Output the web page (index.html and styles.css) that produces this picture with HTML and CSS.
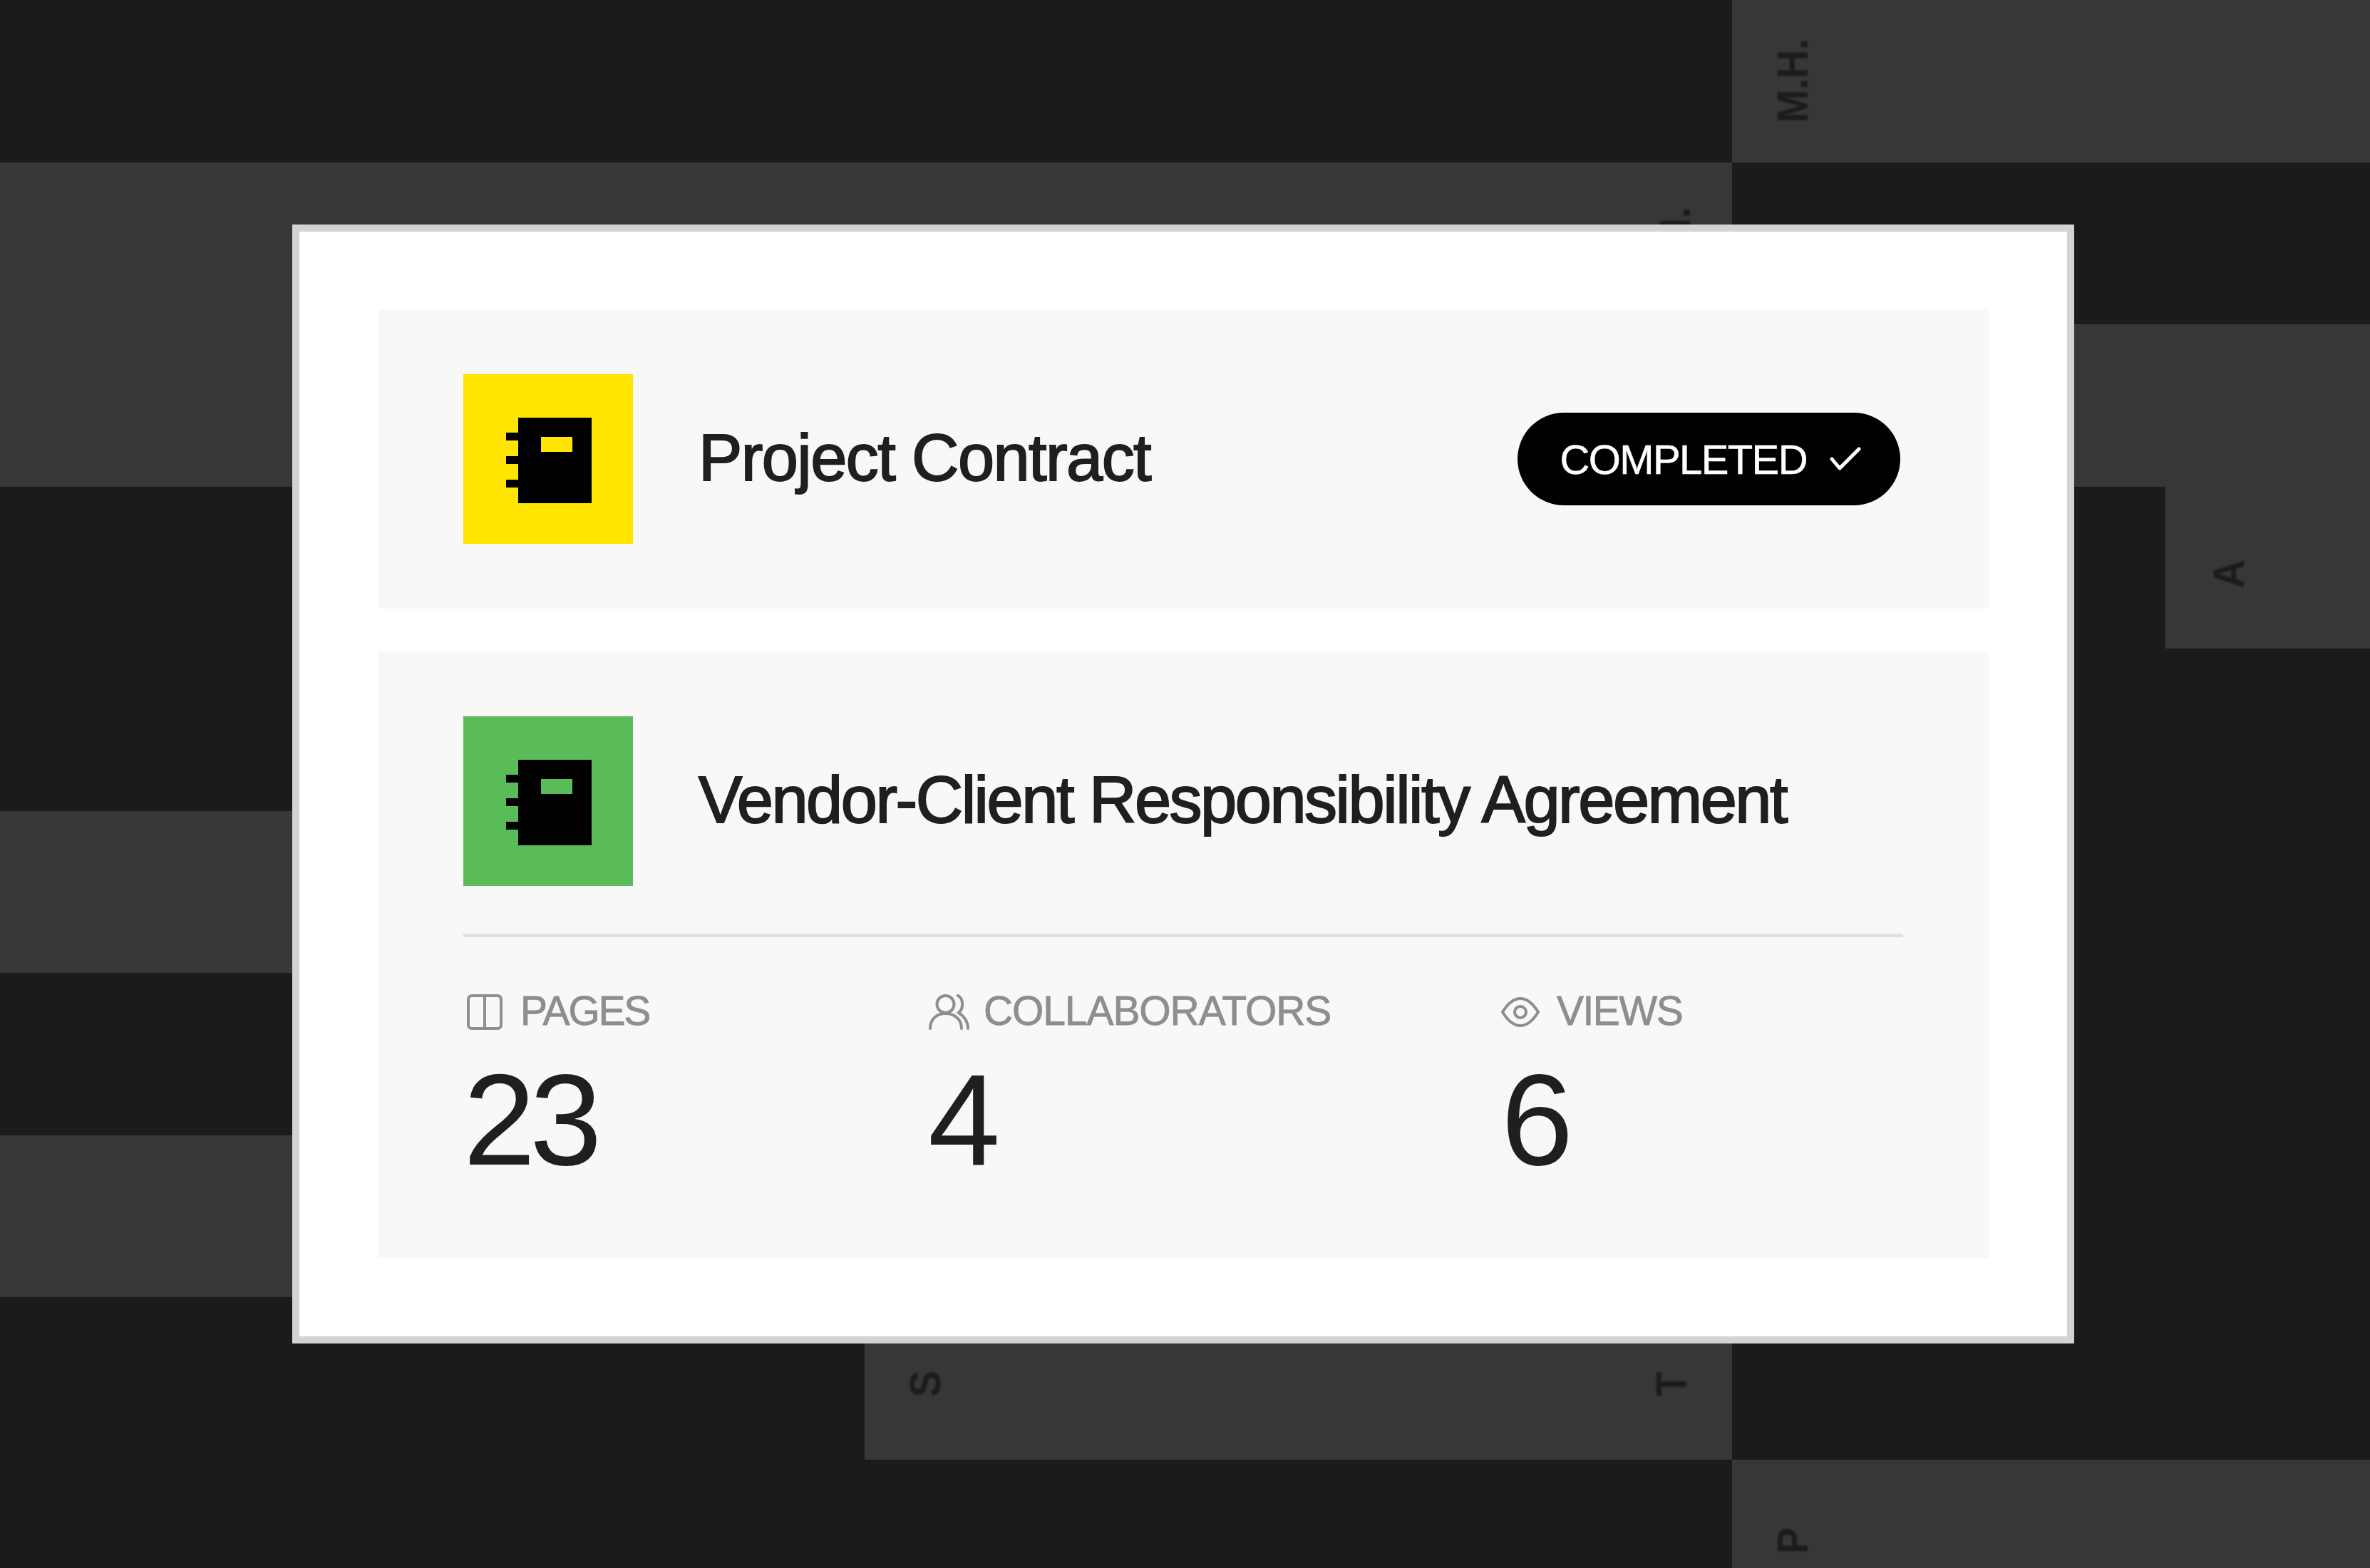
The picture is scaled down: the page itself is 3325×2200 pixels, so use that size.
FILE: index.html
```html
<!DOCTYPE html>
<html lang="en">
<head>
    <meta charset="UTF-8">
    <title>Project Contract</title>
    <link rel="stylesheet" href="styles.css">
</head>
<body>
    <div class="page">
        <!-- Schedule behind the dialog -->
        <div class="timeline">
            <div class="bar bar-mh"><span class="bar-label">M.H.</span></div>
            <div class="bar bar-wide"><span class="bar-label">M.H.</span></div>
            <div class="bar bar-third"></div>
            <div class="bar bar-a"><span class="bar-label">A</span></div>
            <div class="bar bar-left-one"></div>
            <div class="bar bar-left-two"></div>
            <div class="bar bar-st"><span class="bar-label">S</span><span class="bar-label">T</span></div>
            <div class="bar bar-p"><span class="bar-label">P</span></div>
        </div>

        <div class="modal">
            <section class="card">
                <div class="card-head">
                    <div class="tile tile-yellow">
                        <svg class="notebook" viewBox="0 0 120 120">
                            <path class="notebook-body" d="M17 0H120V120H17V98H0V87H17V65H0V54H17V32H0V21H17Z"/>
                            <rect class="notebook-tag" x="49" y="27" width="44" height="21"/>
                        </svg>
                    </div>
                    <h2 class="card-title">Project Contract</h2>
                    <div class="status">
                        <span>COMPLETED</span>
                        <svg class="status-check" viewBox="0 0 44 36">
                            <path d="M3 18L14 31L41 4"/>
                        </svg>
                    </div>
                </div>
            </section>

            <section class="card card-details">
                <div class="card-head">
                    <div class="tile tile-green">
                        <svg class="notebook" viewBox="0 0 120 120">
                            <path class="notebook-body" d="M17 0H120V120H17V98H0V87H17V65H0V54H17V32H0V21H17Z"/>
                            <rect class="notebook-tag" x="49" y="27" width="44" height="21"/>
                        </svg>
                    </div>
                    <h2 class="card-title card-title-long">Vendor-Client Responsibility Agreement</h2>
                </div>

                <div class="stats">
                    <div class="stat stat-pages">
                        <div class="stat-label">
                            <svg class="stat-icon" width="50" height="50" viewBox="0 0 50 50">
                                <rect x="2" y="2" width="46" height="46" rx="5"/>
                                <path d="M25 2V48"/>
                            </svg>
                            <span>PAGES</span>
                        </div>
                        <div class="stat-value">23</div>
                    </div>
                    <div class="stat stat-people">
                        <div class="stat-label">
                            <svg class="stat-icon" width="58" height="50" viewBox="0 0 58 50">
                                <ellipse cx="24.5" cy="14" rx="12" ry="12"/>
                                <path d="M3 48C3 35 12 27 24.5 27C37 27 47 35 47 48"/>
                                <path d="M42 2C50 6 50 20 43 26C50 30 56 38 56 48"/>
                            </svg>
                            <span>COLLABORATORS</span>
                        </div>
                        <div class="stat-value">4</div>
                    </div>
                    <div class="stat stat-views">
                        <div class="stat-label">
                            <svg class="stat-icon" width="54" height="50" viewBox="0 0 54 50">
                                <path d="M2 25C10 12 18 6 27 6C36 6 44 12 52 25C44 38 36 44 27 44C18 44 10 38 2 25Z"/>
                                <circle cx="27" cy="25" r="8"/>
                            </svg>
                            <span>VIEWS</span>
                        </div>
                        <div class="stat-value">6</div>
                    </div>
                </div>
            </section>
        </div>
    </div>
</body>
</html>
```

FILE: styles.css
```css
/* Page */
body {
    margin: 0;
    background: #1b1b1b;
    font-family: "Liberation Sans", Arial, sans-serif;
}

.page {
    position: relative;
    width: 3325px;
    height: 2200px;
    overflow: hidden;
}

/* Schedule grid */
.timeline {
    display: grid;
    grid-template-columns: 1213px 1217px 608px 287px;
    grid-auto-rows: 227.5px;
    height: 100%;
    overflow: hidden;
}

.bar {
    display: flex;
    align-items: center;
    justify-content: space-between;
    padding: 0 62px;
    background: #373737;
}

.bar-mh { grid-column: 3 / 5; grid-row: 1; }
.bar-wide { grid-column: 1 / 3; grid-row: 2 / 4; justify-content: flex-end; align-items: flex-start; padding: 56px 57px 0 0; }
.bar-third { grid-column: 3 / 5; grid-row: 3; }
.bar-a { grid-column: 4; grid-row: 4; padding: 18px 0 0 66px; }
.bar-left-one { grid-column: 1; grid-row: 6; }
.bar-left-two { grid-column: 1; grid-row: 8; }
.bar-st { grid-column: 2; grid-row: 9; padding-top: 16px; }
.bar-p { grid-column: 3 / 5; grid-row: 10; }

.bar-label {
    writing-mode: vertical-rl;
    transform: rotate(180deg) scaleY(0.9);
    font-size: 62px;
    font-weight: bold;
    line-height: 46px;
    color: #1c1c1c;
    filter: blur(1px);
}

/* Dialog */
.modal {
    position: absolute;
    top: 315px;
    left: 410px;
    width: 2500px;
    height: 1570px;
    box-sizing: border-box;
    display: flex;
    flex-direction: column;
    gap: 60px;
    padding: 109px 110px 110px;
    border: 10px solid #d3d3d3;
    background: #fff;
}

.card {
    padding: 91px 120px;
    background: #f8f8f8;
}

.card-details {
    flex: 1;
    padding-bottom: 0;
}

.card-head {
    display: flex;
    align-items: center;
    gap: 92px;
}

.tile {
    display: flex;
    align-items: center;
    justify-content: center;
    flex: none;
    width: 238px;
    height: 238px;
}

.tile-yellow { background: #ffe500; --tile: #ffe500; }
.tile-green { background: #5abc58; --tile: #5abc58; }

.notebook {
    width: 120px;
    height: 120px;
    margin: 3px 0 0 2px;
}

.notebook-body { fill: #000; }
.notebook-tag { fill: var(--tile); }

.card-title {
    margin: 0;
    padding-bottom: 4px;
    font-size: 92px;
    font-weight: normal;
    letter-spacing: -1.6px;
    color: #1f1f1f;
    -webkit-text-stroke: 2px #1f1f1f;
}

.card-title-long {
    letter-spacing: -2.5px;
}

/* Status pill */
.status {
    display: flex;
    align-items: center;
    gap: 32px;
    margin-left: auto;
    margin-right: 4px;
    height: 130px;
    padding: 0 55px 0 59px;
    border-radius: 65px;
    background: #000;
    color: #fff;
    font-size: 58px;
    letter-spacing: -1.6px;
    -webkit-text-stroke: 0.5px #fff;
}

.status-check {
    width: 44px;
    height: 36px;
    fill: none;
    stroke: #fff;
    stroke-width: 5;
    stroke-linecap: round;
    stroke-linejoin: round;
}

/* Stats */
.stats {
    display: grid;
    grid-template-columns: 647px 804px 1fr;
    margin-top: 67px;
    padding-top: 80px;
    border-top: 5px solid #e1e1e1;
}

.stat-label {
    display: flex;
    align-items: center;
    gap: 24px;
    height: 50px;
    padding-left: 5px;
    font-size: 57px;
    line-height: 46px;
    letter-spacing: -1.5px;
    color: #8e8e8e;
    -webkit-text-stroke: 0.8px #8e8e8e;
}

.stat-label span {
    margin-top: -4px;
}

.stat-pages .stat-label {
    letter-spacing: -2.2px;
    gap: 25px;
}

.stat-people .stat-label {
    letter-spacing: -1.1px;
    gap: 20px;
}

.stat-icon {
    flex: none;
    fill: none;
    stroke: #8e8e8e;
    stroke-width: 4;
    stroke-linecap: round;
}

.stat-value {
    margin-top: 35px;
    font-size: 182px;
    line-height: 1;
    letter-spacing: -8px;
    color: #1f1f1f;
}

.stat-people .stat-value,
.stat-views .stat-value {
    padding-left: 5px;
}
```
